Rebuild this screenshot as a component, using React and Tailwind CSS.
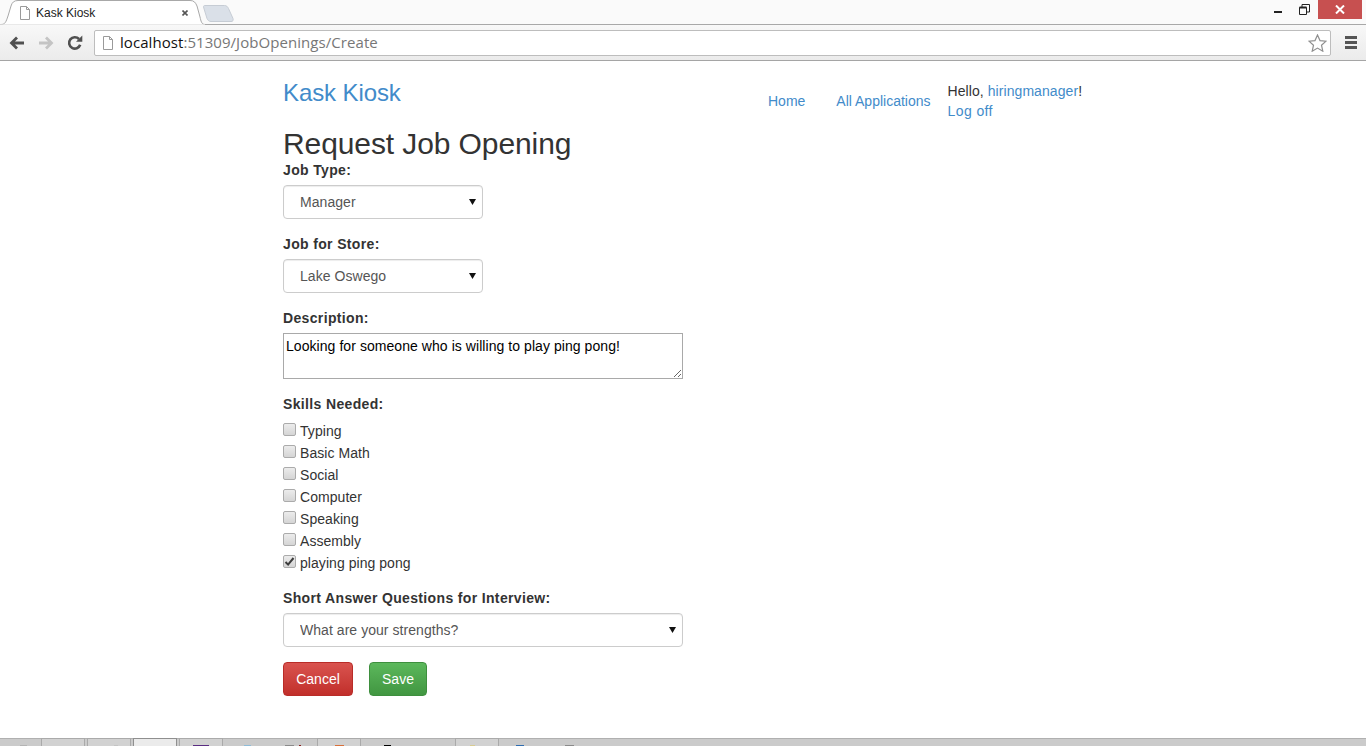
import React from 'react';

const SKILLS = [
  { label: 'Typing' },
  { label: 'Basic Math' },
  { label: 'Social' },
  { label: 'Computer' },
  { label: 'Speaking' },
  { label: 'Assembly' },
  { label: 'playing ping pong', checked: true },
];

const TILE = 'bg-[#d2d2d2] shadow-[inset_1px_1px_0_#aaaaaa,inset_-1px_0_0_#aaaaaa]';

const TASKBAR = [
  { icon: 'bg-[#b4b4b4] w-[7px] ml-[13px]' },
  { tile: TILE },
  { tile: TILE, icon: 'bg-[#c4c4c4] w-[4px] ml-[14px]' },
  { tile: 'bg-[#ebebeb] shadow-[inset_1px_1px_0_#8f8f8f,inset_-1px_0_0_#8f8f8f]' },
  { tile: TILE, icon: 'bg-[#5a2d82] w-[16px]' },
  { icon: 'bg-[#8fbcd8] w-[7px]' },
  { icon: 'bg-[#8a8a8a] w-[9px]', icon2: 'bg-[#8a2020] w-[2px] ml-[5px]' },
  { tile: TILE, icon: 'bg-[#d9703a] w-[9px]' },
  { icon: 'bg-black w-[7px] ml-[5px]' },
  {},
  { tile: TILE, icon: 'bg-[#d8cb90] w-[5px] -ml-[9px]' },
  { icon: 'bg-[#2f6db0] w-[8px] -ml-[6px]' },
  { icon: 'bg-[#8a8a8a] w-[9px]' },
];

function DocIcon() {
  return (
    <svg width="12" height="14" viewBox="0 0 12 14" className="shrink-0">
      <path d="M1.5.5h6l3 3v10h-9z M7.5.5v3h3" fill="#fff" stroke="#9a9a9a" />
    </svg>
  );
}

function Caret() {
  return (
    <svg width="7" height="6" viewBox="0 0 7 6" className="absolute right-[7px] top-[14px] pointer-events-none">
      <path d="M0 0h7L3.5 6z" fill="#111" />
    </svg>
  );
}

function SelectField({ width, options }) {
  return (
    <div className={`relative ${width}`}>
      <select
        defaultValue={options[0]}
        className="block w-full h-[34px] appearance-none bg-white border border-[#cccccc] rounded pl-[16px] pr-6 text-[14px] text-[#555555] tracking-[0.05px] shadow-[inset_0_1px_1px_rgba(0,0,0,0.075)] outline-none"
      >
        {options.map(o => <option key={o}>{o}</option>)}
      </select>
      <Caret />
    </div>
  );
}

function FieldLabel({ children, className = '' }) {
  return <label className={`block h-5 leading-5 text-[14px] font-bold text-[#333333] tracking-[0.35px] ${className}`}>{children}</label>;
}

function Skill({ label, checked }) {
  return (
    <label className="flex items-start h-[22px] text-[14px] leading-[22px] text-[#333333] tracking-[0.05px]">
      <span className="relative mt-[3px] w-[13px] h-[13px] shrink-0">
        <input
          type="checkbox"
          defaultChecked={checked}
          className="block w-[13px] h-[13px] appearance-none rounded-[2px] border border-[#ababab] bg-gradient-to-b from-[#ececec] to-[#d5d5d5]"
        />
        {checked && (
          <svg width="11" height="11" viewBox="0 0 11 11" className="absolute left-[1px] top-[1px] pointer-events-none">
            <path d="M1.5 6l2.6 2.6L9.5 2" fill="none" stroke="#3c3c3c" strokeWidth="2" />
          </svg>
        )}
      </span>
      <span className="ml-[4px]">{label}</span>
    </label>
  );
}

function BrowserChrome() {
  return (
    <div className="h-[61px] shrink-0 flex flex-col font-['Open_Sans',sans-serif]">
      {/* tab strip */}
      <div className="relative h-[25px] bg-[#fafafa] border-b border-[#a8a8a8] flex">
        <div className="relative w-[205px] h-[25px] shrink-0">
          <svg width="205" height="25" viewBox="0 0 205 25" className="absolute inset-0">
            <path d="M0 24.5h1C5 24.5 6 22 8 16L11 6C12 2.5 14 .5 18 .5h172c4 0 5.500 2 7 5.500l3 11c1 4 1.500 7.500 5 7.500" fill="#fff" stroke="#a8a8a8" />
            <path d="M0 25h205" stroke="#fff" />
          </svg>
          <div className="absolute left-[19px] top-[6px]"><DocIcon /></div>
          <span className="absolute left-[36px] top-[5px] text-[12px] leading-4 text-[#222222] font-['Liberation_Sans',sans-serif]">Kask Kiosk</span>
          <svg width="6" height="6" viewBox="0 0 6 6" className="absolute left-[182px] top-[10px]">
            <path d="M.5.5l5 5M5.500.5l-5 5" stroke="#555" strokeWidth="1.600" />
          </svg>
        </div>
        <svg width="31" height="17" viewBox="0 0 31 17" className="mt-[5px] -ml-[2px]">
          <path d="M1.500.5h20c2 0 3 1 4 3l4.500 10c.5 2 0 3-2 3H8c-2 0-3-1-4-3L.8 3c-.5-1.500-.2-2.500.7-2.500z" fill="#dae0e8" stroke="#c6ccd4" />
        </svg>
        <div className="ml-auto flex items-start">
          <svg width="10" height="3" viewBox="0 0 10 3" className="mt-[11px] mr-[15px]"><path d="M0 0h8v2H0z" fill="#222" /></svg>
          <svg width="11" height="11" viewBox="0 0 11 11" className="mt-[4px] mr-[8px]">
            <path d="M.5 3.500h7v7h-7zM3 3.500V.5h7.500V8H8" fill="none" stroke="#222" />
            <path d="M.5 3.500h7" stroke="#222" strokeWidth="2" />
          </svg>
          <div className="w-[44px] h-[19px] mr-[4px] bg-[#c75050] flex items-center justify-center">
            <svg width="10" height="9" viewBox="0 0 10 9"><path d="M1 .5l8 8M9 .5l-8 8" stroke="#fff" strokeWidth="2" /></svg>
          </div>
        </div>
      </div>

      {/* toolbar */}
      <div className="h-[36px] flex items-center bg-gradient-to-b from-[#f8f8f8] to-[#ebebeb] border-b border-[#a5a5a5]">
        <svg width="16" height="14" viewBox="0 0 16 14" className="ml-[9px]">
          <path d="M15 7H3.500M8 1.500L2.500 7 8 12.500" fill="none" stroke="#505050" strokeWidth="2.800" />
        </svg>
        <svg width="16" height="14" viewBox="0 0 16 14" className="ml-[13px]">
          <path d="M1 7h11.500M8 1.500L13.500 7 8 12.500" fill="none" stroke="#c4c4c4" strokeWidth="2.800" />
        </svg>
        <svg width="16" height="16" viewBox="0 0 16 16" className="ml-[13px]">
          <path d="M13.200 9.800A5.700 5.700 0 1 1 12 4" fill="none" stroke="#505050" strokeWidth="2.600" />
          <path d="M9 6.800h6.300V.5z" fill="#505050" />
        </svg>
        <div className="ml-[11px] w-[1237px] h-[26px] flex items-center bg-white border border-[#bdbdbd] rounded-[2px]">
          <div className="ml-[7px]"><DocIcon /></div>
          <span className="ml-[6px] text-[15px] text-[#777777] tracking-[0.06px] whitespace-nowrap"><span className="text-[#111111]">localhost</span>:51309/JobOpenings/Create</span>
          <svg width="19" height="18" viewBox="0 0 19 18" className="ml-auto mr-[3px]">
            <path d="M9.500 1l2.500 5.600 6 .6-4.500 4 1.300 6-5.300-3.100-5.300 3.100 1.300-6L1 7.200l6-.6z" fill="#fff" stroke="#8f8f8f" strokeWidth="1.200" />
          </svg>
        </div>
        <div className="ml-[14px] w-[12px] flex flex-col gap-[2px]">
          <div className="h-[3px] bg-[#555555]" />
          <div className="h-[3px] bg-[#555555]" />
          <div className="h-[3px] bg-[#555555]" />
        </div>
      </div>
    </div>
  );
}

function Taskbar() {
  return (
    <div className="h-[8px] shrink-0 flex bg-[#cbcbcb] border-t border-[#b0b0b0] -ml-[5px]">
      {TASKBAR.map((s, i) => (
        <div key={i} className={`w-[44px] h-[8px] -mt-px mr-[2px] shrink-0 flex justify-center ${s.tile || ''}`}>
          {s.icon && <div className={`h-[1px] mt-[7px] ${s.icon}`} />}
          {s.icon2 && <div className={`h-[1px] mt-[7px] ${s.icon2}`} />}
        </div>
      ))}
    </div>
  );
}

export default function App() {
  return (
    <div className="h-[746px] flex flex-col overflow-hidden bg-white font-['Liberation_Sans',Arial,sans-serif]">
      <BrowserChrome />

      <main className="flex-1 min-h-0">
        <div className="w-[800px] mx-auto text-[14px] text-[#333333]">
          <header className="flex h-[60px] pt-[15px]">
            <a className="text-[24px] leading-[33px] tracking-[-0.1px] text-[#428bca]">Kask Kiosk</a>
            <nav className="ml-auto flex w-[315px]">
              <a className="mt-[15px] h-5 leading-5 text-[#428bca]">Home</a>
              <a className="ml-[31px] mt-[15px] h-5 leading-5 text-[#428bca]">All Applications</a>
              <div className="ml-[17px] leading-5 mt-[5px] tracking-[0.07px]">
                <p>Hello, <a className="text-[#428bca]">hiringmanager</a>!</p>
                <a className="text-[#428bca] tracking-[0.4px]">Log off</a>
              </div>
            </nav>
          </header>

          <h1 className="h-[39px] text-[30px] leading-[46px] tracking-[-0.1px] text-[#333333]">Request Job Opening</h1>

          <FieldLabel className="mb-[5px]">Job Type:</FieldLabel>
          <SelectField width="w-[200px]" options={['Manager', 'Associate', 'Cashier']} />

          <FieldLabel className="mt-[15px] mb-[5px]">Job for Store:</FieldLabel>
          <SelectField width="w-[200px]" options={['Lake Oswego', 'Portland', 'Beaverton']} />

          <FieldLabel className="mt-[15px] mb-[5px]">Description:</FieldLabel>
          <textarea
            defaultValue="Looking for someone who is willing to play ping pong!"
            className="block w-[400px] h-[46px] border border-[#a9a9a9] px-[2px] py-[2px] text-[14px] leading-[20px] tracking-[0.06px] text-black outline-none"
          />

          <FieldLabel className="mt-[15px] mb-[6px]">Skills Needed:</FieldLabel>
          <div className="flex flex-col">
            {SKILLS.map(s => <Skill key={s.label} label={s.label} checked={s.checked} />)}
          </div>

          <FieldLabel className="mt-[14px] mb-[5px]">Short Answer Questions for Interview:</FieldLabel>
          <SelectField width="w-[400px]" options={['What are your strengths?', 'What are your weaknesses?']} />

          <div className="flex gap-4 mt-[15px]">
            <button className="w-[70px] h-[34px] rounded text-white text-[14px] border border-[#b92c28] bg-gradient-to-b from-[#d9534f] to-[#c12e2a]">Cancel</button>
            <button className="w-[58px] h-[34px] rounded text-white text-[14px] border border-[#3e8f3e] bg-gradient-to-b from-[#5cb85c] to-[#419641]">Save</button>
          </div>
        </div>
      </main>

      <Taskbar />
    </div>
  );
}
